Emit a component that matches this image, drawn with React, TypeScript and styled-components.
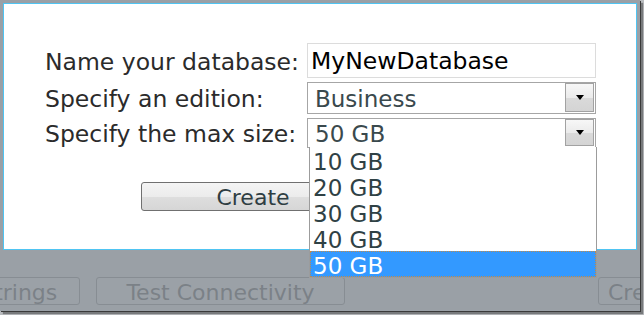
import React from "react";
import styled, { createGlobalStyle } from "styled-components";

const Global = createGlobalStyle`
  html, body { margin: 0; padding: 0; background: #b9bcbf; }
  body { width: 644px; height: 315px; overflow: hidden; font-family: "DejaVu Sans", Verdana, sans-serif; }
  * { box-sizing: border-box; }
`;

const Screen = styled.div`
  width: 644px;
  height: 315px;
  overflow: hidden;
  background: #b9bcbf;
`;

const Window = styled.div`
  width: 640px;
  height: 311px;
  background: #9aa0a6;
  overflow: hidden;
  box-shadow: 1px 1px 0 #3a3a3a, 3px 3px 1px rgba(0, 0, 0, 0.35);
  display: flex;
  flex-direction: column;
`;

const Panel = styled.div`
  position: relative;
  margin: 3px 0 0 3px;
  width: 634px;
  height: 247px;
  flex-shrink: 0;
  background: #ffffff;
  border: 1px solid #4fc4f2;
  padding: 39px 0 0 41px;
  font-size: 23.5px;
`;

const Form = styled.div`
  display: grid;
  grid-template-columns: 262px 289px;
  grid-template-rows: 35px 32px 30px;
  row-gap: 4px;
  align-items: center;
`;

const Label = styled.div`
  color: #2b2b2b;
  white-space: nowrap;
  padding-top: 2px;
`;

const TextBox = styled.div`
  height: 35px;
  border: 1px solid #dcdcdc;
  padding-left: 3px;
  display: flex;
  align-items: center;
  color: #000;
  padding-top: 1px;
`;

const Combo = styled.div<{ $h: number }>`
  position: relative;
  height: ${(p) => p.$h}px;
  border: 1px solid #a6a6a6;
  display: flex;
  align-items: stretch;
  background: #fff;
`;

const ComboText = styled.div`
  flex: 1;
  padding-left: 7px;
  display: flex;
  align-items: center;
  color: #3a494d;
  padding-top: 2px;
  font-size: 23px;
`;

const ComboButton = styled.div`
  width: 29px;
  margin: 0 1px 1px 0;
  border: 1px solid #a2a2a2;
  background: linear-gradient(#f7f7f7, #ebebeb 50%, #dadada 51%, #d4d4d4);
  display: flex;
  align-items: center;
  justify-content: center;
`;

const Popup = styled.div`
  position: absolute;
  top: 100%;
  left: 1px;
  width: 288px;
  background: #fff;
  border: 1px solid #9c9c9c;
  border-top: none;
  z-index: 5;
`;

const Item = styled.div<{ $sel?: boolean }>`
  height: 26px;
  display: flex;
  align-items: center;
  padding-left: 3px;
  padding-top: 4px;
  font-size: 23px;
  color: ${(p) => (p.$sel ? "#ffffff" : "#2f4145")};
  background: ${(p) => (p.$sel ? "#3399ff" : "transparent")};
  outline: ${(p) => (p.$sel ? "1px dotted #c08a4a" : "none")};
  outline-offset: -1px;
`;

const ButtonRow = styled.div`
  display: flex;
  gap: 10px;
  margin: 34px 0 0 96px;
`;

const DialogButton = styled.div<{ $w: number }>`
  width: ${(p) => p.$w}px;
  height: 29px;
  border: 1px solid #707070;
  border-radius: 3px;
  background: linear-gradient(#f4f4f4, #ececec 50%, #dedede 51%, #d6d6d6);
  color: #2f3e43;
  font-size: 22px;
  display: flex;
  align-items: center;
  justify-content: center;
  padding-top: 2px;
`;

const BottomBar = styled.div`
  display: flex;
  margin-top: 27px;
  font-size: 22px;
`;

const GhostButton = styled.div<{ $w: number; $ml: number; $left?: boolean }>`
  flex-shrink: 0;
  width: ${(p) => p.$w}px;
  margin-left: ${(p) => p.$ml}px;
  height: 28px;
  border: 1px solid #878d93;
  border-radius: 3px;
  background: #9ba1a7;
  color: #7b8187;
  display: flex;
  align-items: center;
  justify-content: ${(p) => (p.$left ? "flex-start" : "center")};
  padding-left: ${(p) => (p.$left ? "9px" : "0")};
  padding-top: 2px;
  white-space: nowrap;
`;

const Arrow = () => (
  <svg width="8" height="5" viewBox="0 0 8 5">
    <polygon points="0,0 8,0 4,5" fill="#000" />
  </svg>
);

export default function App() {
  const sizes = ["10 GB", "20 GB", "30 GB", "40 GB", "50 GB"];
  return (
    <Screen>
      <Global />
      <Window>
        <Panel>
          <Form>
            <Label>Name your database:</Label>
            <TextBox>MyNewDatabase</TextBox>
            <Label>Specify an edition:</Label>
            <Combo $h={32}>
              <ComboText>Business</ComboText>
              <ComboButton>
                <Arrow />
              </ComboButton>
            </Combo>
            <Label>Specify the max size:</Label>
            <Combo $h={30}>
              <ComboText>50 GB</ComboText>
              <ComboButton>
                <Arrow />
              </ComboButton>
              <Popup>
                {sizes.map((s) => (
                  <Item key={s} $sel={s === "50 GB"}>
                    {s}
                  </Item>
                ))}
              </Popup>
            </Combo>
          </Form>
          <ButtonRow>
            <DialogButton $w={224}>Create</DialogButton>
            <DialogButton $w={222}>Cancel</DialogButton>
          </ButtonRow>
        </Panel>
        <BottomBar>
          <GhostButton $w={254} $ml={-174}>Connection Strings</GhostButton>
          <GhostButton $w={249} $ml={16}>Test Connectivity</GhostButton>
          <GhostButton $w={200} $ml={253} $left>Create Database</GhostButton>
        </BottomBar>
      </Window>
    </Screen>
  );
}
